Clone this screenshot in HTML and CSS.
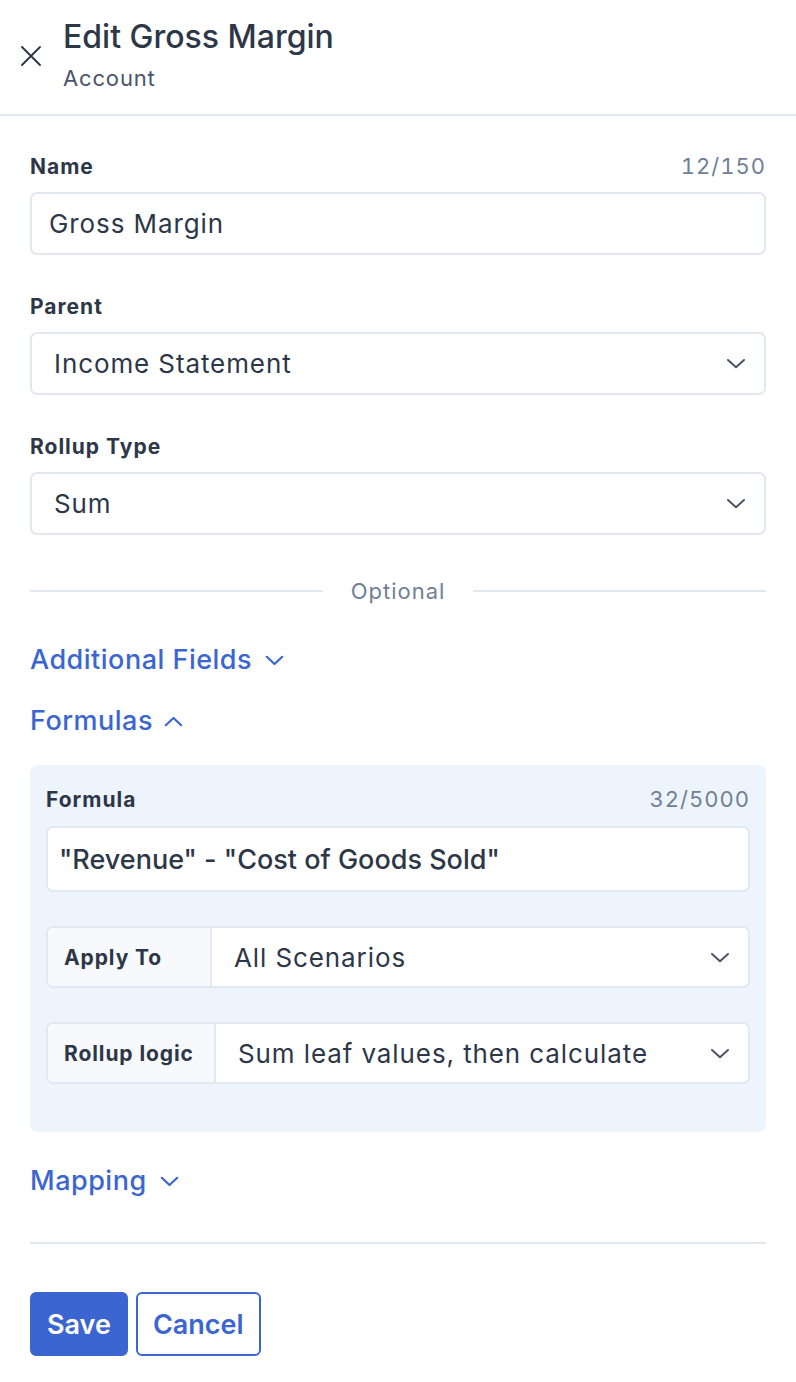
FILE: index.html
```html
<!DOCTYPE html>
<html lang="en">
<head>
<meta charset="utf-8">
<title>Edit Gross Margin</title>
<link rel="stylesheet" href="styles.css">
</head>
<body>
<div class="panel">
  <header class="header">
    <button class="close" aria-label="Close">
      <svg width="22" height="22" viewBox="0 0 22 22"><path d="M2 2 L20 20 M20 2 L2 20" stroke="#2d3748" stroke-width="1.9" stroke-linecap="round" fill="none"/></svg>
    </button>
    <div class="titles">
      <div class="title">Edit Gross Margin</div>
      <div class="subtitle">Account</div>
    </div>
  </header>

  <main class="content">
    <div class="field">
      <div class="label-row"><span class="label">Name</span><span class="counter">12/150</span></div>
      <div class="input">Gross Margin</div>
    </div>

    <div class="field">
      <div class="label-row"><span class="label">Parent</span></div>
      <div class="select"><span>Income Statement</span>
        <svg class="chev" width="20" height="11" viewBox="0 0 20 11"><path d="M2 2 L10 9.2 L18 2" stroke="#4a5568" stroke-width="2" fill="none" stroke-linecap="round" stroke-linejoin="round"/></svg>
      </div>
    </div>

    <div class="field">
      <div class="label-row"><span class="label">Rollup Type</span></div>
      <div class="select"><span>Sum</span>
        <svg class="chev" width="20" height="11" viewBox="0 0 20 11"><path d="M2 2 L10 9.2 L18 2" stroke="#4a5568" stroke-width="2" fill="none" stroke-linecap="round" stroke-linejoin="round"/></svg>
      </div>
    </div>

    <div class="divider-text"><span class="line"></span><span class="opt">Optional</span><span class="line"></span></div>

    <div class="toggle first">Additional Fields
      <svg width="19" height="11" viewBox="0 0 19 11"><path d="M1.8 1.8 L9.5 9 L17.2 1.8" stroke="#3b66d1" stroke-width="2.2" fill="none" stroke-linecap="round" stroke-linejoin="round"/></svg>
    </div>
    <div class="toggle formulas">Formulas
      <svg width="19" height="11" viewBox="0 0 19 11"><path d="M1.8 9.2 L9.5 2 L17.2 9.2" stroke="#3b66d1" stroke-width="2.2" fill="none" stroke-linecap="round" stroke-linejoin="round"/></svg>
    </div>

    <section class="formula-box">
      <div class="label-row"><span class="label">Formula</span><span class="counter">32/5000</span></div>
      <div class="formula-input">"Revenue" - "Cost of Goods Sold"</div>

      <div class="group">
        <div class="addon addon-apply">Apply To</div>
        <div class="group-value"><span>All Scenarios</span>
          <svg class="chev" width="20" height="11" viewBox="0 0 20 11"><path d="M2 2 L10 9.2 L18 2" stroke="#4a5568" stroke-width="2" fill="none" stroke-linecap="round" stroke-linejoin="round"/></svg>
        </div>
      </div>
      <div class="group">
        <div class="addon addon-rollup">Rollup logic</div>
        <div class="group-value"><span>Sum leaf values, then calculate</span>
          <svg class="chev" width="20" height="11" viewBox="0 0 20 11"><path d="M2 2 L10 9.2 L18 2" stroke="#4a5568" stroke-width="2" fill="none" stroke-linecap="round" stroke-linejoin="round"/></svg>
        </div>
      </div>
    </section>

    <div class="toggle mapping">Mapping
      <svg width="19" height="11" viewBox="0 0 19 11"><path d="M1.8 1.8 L9.5 9 L17.2 1.8" stroke="#3b66d1" stroke-width="2.2" fill="none" stroke-linecap="round" stroke-linejoin="round"/></svg>
    </div>

    <div class="rule"></div>

    <div class="actions">
      <button class="btn primary">Save</button>
      <button class="btn secondary">Cancel</button>
    </div>
  </main>
</div>
</body>
</html>
```

FILE: styles.css
```css
* { box-sizing: border-box; }
html, body { margin: 0; padding: 0; background: #fff; }
body {
  font-family: Inter, "Noto Sans", "Liberation Sans", sans-serif;
  color: #2d3748;
  width: 796px;
}
.panel { width: 796px; }

.header {
  display: flex;
  align-items: center;
  height: 116px;
  border-bottom: 2px solid #e2e8f0;
  padding: 0 0 6px 20px;
}
.close {
  background: none;
  border: 0;
  padding: 0;
  width: 22px;
  height: 22px;
  display: flex;
  margin-right: 21px;
  margin-top: 4px;
}
.titles { display: flex; flex-direction: column; }
.title {
  font-size: 32px;
  font-weight: 500;
  line-height: 40px;
  color: #2d3748;
}
.subtitle {
  font-size: 22px;
  line-height: 28px;
  color: #4a5568;
  margin-top: 7px;
  letter-spacing: 0.85px;
}

.content { padding: 36px 30px 0 30px; }

.field { margin-bottom: 37px; }
.field:last-of-type { margin-bottom: 0; }
.label-row {
  display: flex;
  justify-content: space-between;
  align-items: center;
  height: 28px;
}
.label {
  font-size: 21px;
  font-weight: 700;
  letter-spacing: 1px;
  color: #2d3748;
}
.counter {
  font-size: 22px;
  color: #718096;
  font-variant-numeric: tabular-nums;
  letter-spacing: 1px;
}
.input, .select {
  margin-top: 12px;
  height: 63px;
  border: 2px solid #e2e8f0;
  border-radius: 7px;
  display: flex;
  align-items: center;
  font-size: 26px;
  letter-spacing: 0.9px;
  color: #2d3748;
}
.input { padding-left: 17px; }
.select { padding-left: 22px; padding-right: 18px; justify-content: space-between; }
.chev { flex: none; }

.divider-text {
  display: flex;
  align-items: center;
  margin-top: 42px;
  height: 28px;
}
.divider-text .line { flex: 1; height: 2px; background: #e2e8f0; }
.opt { font-size: 22px; color: #718096; padding: 0 28px; letter-spacing: 1px; }

.toggle {
  display: flex;
  align-items: center;
  gap: 13px;
  height: 32px;
  font-size: 27px;
  font-weight: 500;
  letter-spacing: 0.5px;
  color: #3b66d1;
  margin-top: 29px;
}
.toggle.first { margin-top: 38px; }
.toggle.formulas { gap: 11px; }
.toggle svg { margin-top: 2px; }

.formula-box {
  margin-top: 29px;
  background: #eef4fc;
  border-radius: 8px;
  padding: 20px 16px 48px 16px;
}
.formula-input {
  margin-top: 13px;
  height: 66px;
  background: #fff;
  border: 2px solid #e2e8f0;
  border-radius: 7px;
  display: flex;
  align-items: center;
  padding-left: 11px;
  font-size: 27px;
  font-weight: 500;
  color: #2d3748;
}
.group {
  display: flex;
  height: 62px;
  border: 2px solid #e2e8f0;
  border-radius: 7px;
  overflow: hidden;
  margin-top: 34px;
  background: #fff;
}
.addon {
  flex: none;
  background: #f7f9fc;
  border-right: 2px solid #e2e8f0;
  display: flex;
  align-items: center;
  padding: 0 0 0 16px;
  font-size: 21px;
  font-weight: 700;
  letter-spacing: 0.9px;
  color: #2d3748;
  white-space: nowrap;
}
.addon-apply { width: 164px; }
.addon-rollup { width: 168px; }
.group-value {
  flex: 1;
  display: flex;
  align-items: center;
  justify-content: space-between;
  padding-left: 22px;
  padding-right: 18px;
  font-size: 26px;
  letter-spacing: 0.9px;
  color: #2d3748;
}

.toggle.mapping { margin-top: 32px; }

.rule { height: 2px; background: #e2e8f0; margin-top: 46px; }

.actions {
  display: flex;
  gap: 8px;
  margin-top: 48px;
}
.btn {
  font-family: inherit;
  font-size: 27px;
  font-weight: 600;
  height: 64px;
  border-radius: 6px;
  padding: 0 15px;
  cursor: pointer;
}
.btn.primary {
  background: #3b66d1;
  color: #fff;
  border: 2px solid #3b66d1;
}
.btn.secondary {
  background: #fff;
  color: #3b66d1;
  border: 2px solid #3b66d1;
}
```
